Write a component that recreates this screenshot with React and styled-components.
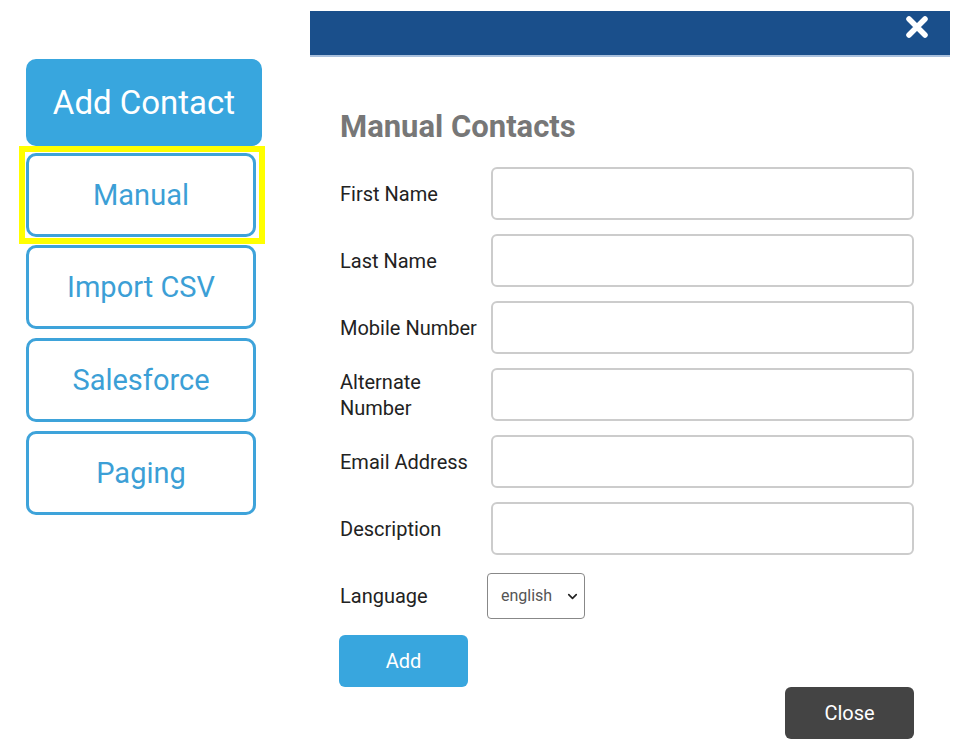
import React from 'react';
import styled, { createGlobalStyle } from 'styled-components';
import { ChevronDown } from 'lucide-react';

const GlobalStyle = createGlobalStyle`
  body {
    margin: 0;
    background: #fff;
    font-family: Roboto, "Liberation Sans", sans-serif;
  }
`;

const fields = [
  'First Name',
  'Last Name',
  'Mobile Number',
  'Alternate Number',
  'Email Address',
  'Description',
];

const tabs = ['Manual', 'Import CSV', 'Salesforce', 'Paging'];

const App = () => {
  return (
    <Page>
      <GlobalStyle />
      <Sidebar>
        <AddContact>Add Contact</AddContact>
        {tabs.map((t) => (
          <TabWrap key={t} highlight={t === 'Manual'}>
            <Tab>{t}</Tab>
          </TabWrap>
        ))}
      </Sidebar>
      <Panel>
        <Header>
          <CloseIcon viewBox="0 0 24 24">
            <path d="M4 4 L20 20 M20 4 L4 20" stroke="#fff" strokeWidth="5.5" strokeLinecap="round" />
          </CloseIcon>
        </Header>
        <Body>
          <Title>Manual Contacts</Title>
          <Form>
            {fields.map((f) => (
              <React.Fragment key={f}>
                <Label>{f}</Label>
                <Input type="text" />
              </React.Fragment>
            ))}
            <Label>Language</Label>
            <SelectCell>
              <SelectBox>
                <Select defaultValue="english">
                  <option value="english">english</option>
                </Select>
                <Chevron size={15} strokeWidth={2.6} />
              </SelectBox>
            </SelectCell>
          </Form>
          <AddButton>Add</AddButton>
          <Footer>
            <CloseButton>Close</CloseButton>
          </Footer>
        </Body>
      </Panel>
    </Page>
  );
};

const Page = styled.div`
  display: flex;
  align-items: flex-start;
  width: 960px;
  height: 756px;
  overflow: hidden;
`;

const Sidebar = styled.div`
  width: 284px;
  padding: 59px 0 0 19px;
  display: flex;
  flex-direction: column;
  box-sizing: border-box;
`;

const AddContact = styled.div`
  width: 236px;
  height: 87px;
  margin-left: 7px;
  border-radius: 10px;
  background: #38a6de;
  color: #fff;
  font-size: 33px;
  display: flex;
  align-items: center;
  justify-content: center;
`;

const TabWrap = styled.div`
  width: 246px;
  padding: ${(p) => (p.highlight ? '1px 3px 1px 1px' : '0 9px 0 7px')};
  border: ${(p) => (p.highlight ? '6px solid #ffff00' : 'none')};
  margin-bottom: ${(p) => (p.highlight ? '1px' : '9px')};
  box-sizing: border-box;
`;

const Tab = styled.div`
  height: 84px;
  border: 3px solid #3ea3da;
  border-radius: 10px;
  box-sizing: border-box;
  color: #3c9fd6;
  font-size: 29px;
  display: flex;
  align-items: center;
  justify-content: center;
  background: #fff;
`;

const Panel = styled.div`
  width: 640px;
  margin: 11px 0 0 26px;
`;

const Header = styled.div`
  height: 44px;
  background: #1a4f8b;
  border-bottom: 2px solid #a9c0dd;
  display: flex;
  align-items: center;
  justify-content: flex-end;
  padding-right: 21px;
`;

const CloseIcon = styled.svg`
  width: 24px;
  height: 24px;
  margin-top: -12px;
`;

const Body = styled.div`
  padding: 51px 36px 0 30px;
`;

const Title = styled.h2`
  margin: 0 0 21px;
  font-size: 31px;
  line-height: 38px;
  font-weight: 700;
  color: #777;
`;

const Form = styled.div`
  display: grid;
  grid-template-columns: 147px 1fr;
  row-gap: 14px;
  align-items: center;
`;

const Label = styled.div`
  font-size: 20px;
  line-height: 26px;
  color: #222;
`;

const Input = styled.input`
  height: 53px;
  margin-left: 4px;
  border: 2px solid #ccc;
  border-radius: 6px;
  box-sizing: border-box;
  outline: none;
`;

const SelectCell = styled.div`
  height: 53px;
  display: flex;
  align-items: center;
`;

const SelectBox = styled.div`
  position: relative;
  width: 98px;
  height: 46px;
`;

const Select = styled.select`
  appearance: none;
  width: 100%;
  height: 100%;
  border: 1px solid #888;
  border-radius: 4px;
  background: #fff;
  color: #555;
  font-family: Roboto, "Liberation Sans", sans-serif;
  font-size: 16px;
  padding: 0 0 0 13px;
  outline: none;
`;

const Chevron = styled(ChevronDown)`
  position: absolute;
  right: 5px;
  top: 16px;
  color: #222;
  pointer-events: none;
`;

const AddButton = styled.button`
  margin: 13px 0 0 -1px;
  width: 129px;
  height: 52px;
  border: none;
  border-radius: 6px;
  background: #38a6de;
  color: #fff;
  font-family: Roboto, "Liberation Sans", sans-serif;
  font-size: 20px;
  cursor: pointer;
`;

const Footer = styled.div`
  display: flex;
  justify-content: flex-end;
`;

const CloseButton = styled.button`
  width: 129px;
  height: 52px;
  border: none;
  border-radius: 6px;
  background: #444;
  color: #fff;
  font-family: Roboto, "Liberation Sans", sans-serif;
  font-size: 20px;
  cursor: pointer;
`;

export default App;
